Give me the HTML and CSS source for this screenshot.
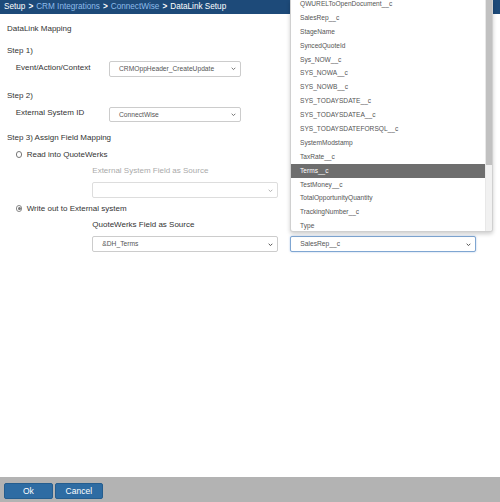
FILE: index.html
```html
<!DOCTYPE html>
<html>
<head>
<meta charset="utf-8">
<link rel="stylesheet" href="styles.css">
</head>
<body>
<div class="page">
  <div class="topbar">
    <span class="crumb">Setup</span><span class="sep">&gt;</span><span class="crumb link">CRM Integrations</span><span class="sep">&gt;</span><span class="crumb link">ConnectWise</span><span class="sep">&gt;</span><span class="crumb">DataLink Setup</span>
  </div>
  <div class="content">
    <div class="title">DataLink Mapping</div>
    <div class="step s1">Step 1)</div>
    <div class="row r1">
      <div class="row-label">Event/Action/Context</div>
      <div class="select narrow"><span>CRMOppHeader_CreateUpdate</span><svg class="chev" viewBox="0 0 6 4"><path d="M0.8 0.8 L3 3 L5.2 0.8"/></svg></div>
    </div>
    <div class="step s2">Step 2)</div>
    <div class="row r2">
      <div class="row-label">External System ID</div>
      <div class="select narrow"><span>ConnectWise</span><svg class="chev" viewBox="0 0 6 4"><path d="M0.8 0.8 L3 3 L5.2 0.8"/></svg></div>
    </div>
    <div class="step s3">Step 3) Assign Field Mapping</div>
    <div class="radio-row rr1"><span class="radio"></span>Read into QuoteWerks</div>
    <div class="sub-label muted l1">External System Field as Source</div>
    <div class="select wide disabled d1"><span></span><svg class="chev" viewBox="0 0 6 4"><path d="M0.8 0.8 L3 3 L5.2 0.8"/></svg></div>
    <div class="radio-row rr2"><span class="radio checked"></span>Write out to External system</div>
    <div class="sub-label l2">QuoteWerks Field as Source</div>
    <div class="pair">
      <div class="select wide"><span>&amp;DH_Terms</span><svg class="chev dark" viewBox="0 0 6 4"><path d="M0.8 0.8 L3 3 L5.2 0.8"/></svg></div>
      <div class="select wide focus"><span>SalesRep__c</span><svg class="chev dark" viewBox="0 0 6 4"><path d="M0.8 0.8 L3 3 L5.2 0.8"/></svg></div>
    </div>
  </div>
  <div class="footer">
    <button class="btn ok">Ok</button>
    <button class="btn cancel">Cancel</button>
  </div>

  <div class="dropdown">
    <ul class="options">
      <li>QWURELToOpenDocument__c</li>
      <li>SalesRep__c</li>
      <li>StageName</li>
      <li>SyncedQuoteId</li>
      <li>Sys_NOW__c</li>
      <li>SYS_NOWA__c</li>
      <li>SYS_NOWB__c</li>
      <li>SYS_TODAYSDATE__c</li>
      <li>SYS_TODAYSDATEA__c</li>
      <li>SYS_TODAYSDATEFORSQL__c</li>
      <li>SystemModstamp</li>
      <li>TaxRate__c</li>
      <li class="active">Terms__c</li>
      <li>TestMoney__c</li>
      <li>TotalOpportunityQuantity</li>
      <li>TrackingNumber__c</li>
      <li>Type</li>
    </ul>
    <div class="scrollbar"><div class="thumb"></div></div>
  </div>
</div>
</body>
</html>
```
FILE: styles.css
```css
* { box-sizing: border-box; }
html, body { margin: 0; padding: 0; }
body {
  font-family: "Liberation Sans", Arial, sans-serif;
  font-size: 8px;
  color: #333;
  background: #fff;
}
.page {
  position: relative;
  width: 500px;
  height: 502px;
  display: flex;
  flex-direction: column;
  overflow: hidden;
}
.topbar {
  height: 14px;
  background: #1d4a79;
  color: #fff;
  font-size: 8.2px;
  line-height: 14px;
  padding-left: 4px;
  white-space: nowrap;
  display: flex;
}
.topbar .link { color: #8dbbe9; }
.topbar .sep { padding: 0 3px; font-weight: bold; }
.content {
  flex: 1;
  padding-left: 7px;
  display: flex;
  flex-direction: column;
  align-items: flex-start;
}
.title { line-height: 10px; margin-top: 10px; }
.step { line-height: 10px; }
.s1 { margin-top: 12px; }
.r1 { margin-top: 5px; }
.s2 { margin-top: 14px; }
.r2 { margin-top: 6px; }
.s3 { margin-top: 10.7px; }
.row {
  display: flex;
  align-items: flex-start;
}
.row-label {
  width: 102px;
  padding-left: 8.7px;
  line-height: 11px;
  padding-top: 0.5px;
}
.select {
  position: relative;
  height: 15.7px;
  border: 1px solid #ccc;
  border-radius: 2px;
  background: #fff;
  font-size: 6.7px;
  color: #555;
  line-height: 13.7px;
  padding-left: 9px;
  white-space: nowrap;
}
.select.narrow { width: 131.7px; }
.select.wide { width: 185.5px; }
.select.disabled { border-color: #ddd; }
.select.focus {
  border-color: #7fa6d2;
  box-shadow: 0 0 2px rgba(102, 150, 210, 0.55);
}
.chev {
  position: absolute;
  right: 4px;
  top: 5.3px;
  width: 5px;
  height: 3.5px;
  fill: none;
  stroke: #666;
  stroke-width: 1.1;
}
.chev.dark { stroke: #444; }
.disabled .chev { stroke: #aaa; }
.radio-row {
  display: flex;
  align-items: center;
  line-height: 10px;
  padding-left: 8.7px;
}
.rr1 { margin-top: 6.6px; }
.rr2 { margin-top: 5.6px; }
.radio {
  width: 6.5px;
  height: 6.5px;
  border: 0.8px solid #777;
  border-radius: 50%;
  margin-right: 4.5px;
  background: #fff;
  position: relative;
}
.radio.checked { border-color: #888; }
.radio.checked::after {
  content: "";
  position: absolute;
  left: 1px;
  top: 1px;
  width: 3px;
  height: 3px;
  border-radius: 50%;
  background: #777;
}
.sub-label {
  line-height: 10px;
  margin-left: 85.3px;
}
.muted { color: #aaa; }
.l1 { margin-top: 6.7px; }
.l2 { margin-top: 6.7px; }
.d1 { margin-top: 6px; margin-left: 85.3px; }
.pair {
  display: flex;
  gap: 12.5px;
  margin-top: 6px;
  margin-left: 85.3px;
}
.footer {
  height: 25px;
  background: #b3b3b3;
  padding: 6.3px 0 0 4px;
  display: flex;
  align-items: flex-start;
  gap: 2.3px;
}
.btn {
  height: 16px;
  background: #2e6ca3;
  border: 1px solid #255d8e;
  border-radius: 2px;
  color: #fff;
  font-family: "Liberation Sans", Arial, sans-serif;
  font-size: 8.5px;
  line-height: 14px;
  padding: 0;
  text-align: center;
}
.btn.ok { width: 48.7px; }
.btn.cancel { width: 47.7px; }
.dropdown {
  position: absolute;
  left: 290px;
  top: 0;
  width: 203.3px;
  height: 232px;
  background: #fff;
  border: 1px solid #d0d0d0;
  border-top: none;
  border-radius: 0 0 3px 3px;
  box-shadow: 0 2px 4px rgba(0, 0, 0, 0.2);
  display: flex;
  overflow: hidden;
}
.options {
  list-style: none;
  margin: -3px 0 0 0;
  padding: 0;
  flex: 1;
}
.options li {
  height: 13.9px;
  line-height: 13.9px;
  padding-left: 9px;
  font-size: 6.6px;
  color: #555;
  white-space: nowrap;
}
.options li.active {
  background: #6e6e6e;
  color: #fff;
}
.scrollbar {
  width: 7.3px;
  background: #f1f1f1;
  border-left: 1px solid #e8e8e8;
}
.thumb {
  height: 165px;
  background: #c1c1c1;
}
```
